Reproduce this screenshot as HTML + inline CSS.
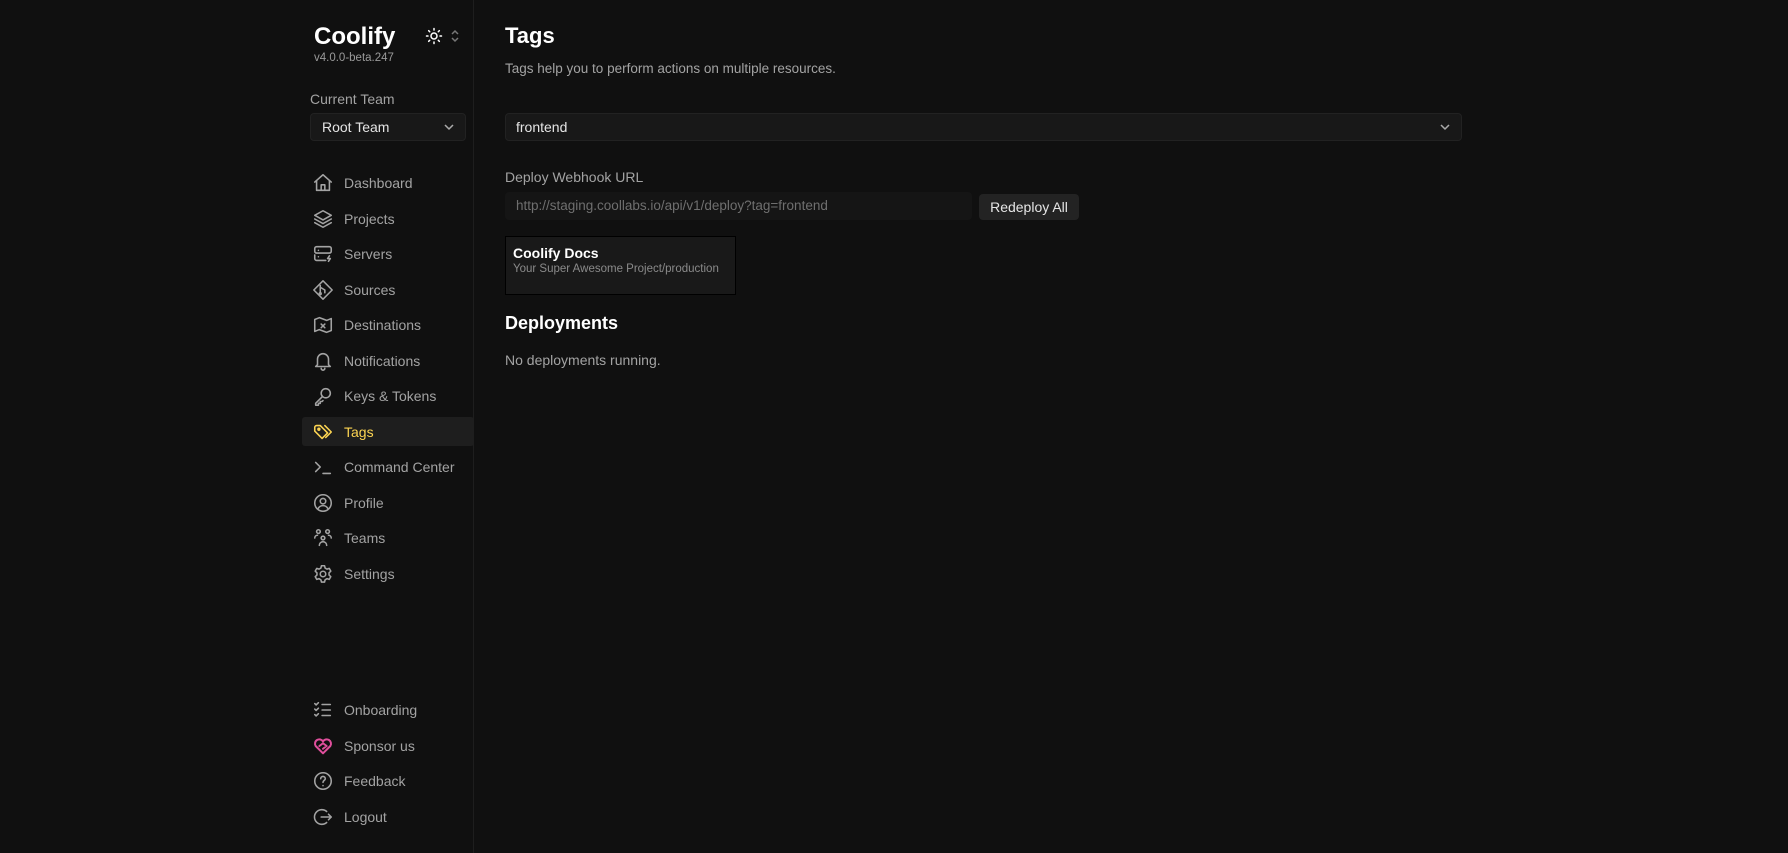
<!DOCTYPE html>
<html><head><meta charset="utf-8"><style>
*{margin:0;padding:0;box-sizing:border-box}
body{width:1788px;height:853px;background:#101010;font-family:"Liberation Sans",sans-serif;color:#a3a3a3;position:relative;overflow:hidden}
.a{position:absolute;white-space:nowrap}
.side{position:absolute;left:0;top:0;width:474px;height:853px;border-right:1px solid #1e1e1e}
.nav{position:absolute;left:302px;width:172px;height:30px;display:flex;align-items:center;font-size:14px;color:#a3a3a3}
.nav svg{position:absolute;left:10px;width:22px;height:22px;fill:none;stroke:#a3a3a3;stroke-width:1.7;stroke-linecap:round;stroke-linejoin:round}
.nav span{position:absolute;left:42px}
</style></head><body>
<div class="side"></div>
<div class="a" style="left:314px;top:23px;font-size:24px;font-weight:bold;color:#fff">Coolify</div>
<div class="a" style="left:314px;top:52px;font-size:11.5px;color:#9a9a9a">v4.0.0-beta.247</div>
<svg class="a" style="left:425px;top:27px" width="18" height="18" viewBox="0 0 24 24" fill="none" stroke="#fff" stroke-width="2" stroke-linecap="round"><circle cx="12" cy="12" r="4"/><path d="M12 2v2M12 20v2M4.9 4.9l1.4 1.4M17.7 17.7l1.4 1.4M2 12h2M20 12h2M4.9 19.1l1.4-1.4M17.7 6.3l1.4-1.4"/></svg>
<svg class="a" style="left:450px;top:29px" width="10" height="14" viewBox="0 0 10 14" fill="none" stroke="#777" stroke-width="1.5"><path d="M2 5l3-3 3 3M2 9l3 3 3-3"/></svg>
<div class="a" style="left:310px;top:91px;font-size:14px;color:#a3a3a3">Current Team</div>
<div class="a" style="left:310px;top:113px;width:156px;height:28px;background:#181818;border-radius:4px;border:1px solid #222"></div>
<div class="a" style="left:322px;top:119px;font-size:14px;color:#e5e5e5">Root Team</div>
<svg class="a" style="left:443px;top:122px" width="12" height="10" viewBox="0 0 12 10" fill="none" stroke="#aaa" stroke-width="1.5"><path d="M2 3l4 4 4-4"/></svg>

<div class="a" style="left:302px;top:417px;width:172px;height:29px;background:#1e1e1e;border-radius:3px"></div>

<div class="nav" style="top:168px"><svg viewBox="0 0 24 24"><path d="M3 11l9-8 9 8M5 9.5V20h14V9.5M10 20v-6h4v6"/></svg><span>Dashboard</span></div>
<div class="nav" style="top:204px"><svg viewBox="0 0 24 24"><path d="M12 3l9 5-9 5-9-5z M3 12l9 5 9-5M3 16l9 5 9-5"/></svg><span>Projects</span></div>
<div class="nav" style="top:239px"><svg viewBox="0 0 24 24"><rect x="3" y="4" width="18" height="7" rx="2"/><path d="M3 13v4a2 2 0 002 2h10M7 8h.01M7 15h.01M19 14l-2 3h3l-2 3"/></svg><span>Servers</span></div>
<div class="nav" style="top:275px"><svg viewBox="0 0 24 24"><path d="M12 2l10 10-10 10L2 12z M9 7v8M9 9l5 3v3"/><circle cx="9" cy="16" r="1"/></svg><span>Sources</span></div>
<div class="nav" style="top:310px"><svg viewBox="0 0 24 24"><path d="M3 6l5-2 8 3 5-2v13l-5 2-8-3-5 2z M10 11l4 4M14 11l-4 4"/></svg><span>Destinations</span></div>
<div class="nav" style="top:346px"><svg viewBox="0 0 24 24"><path d="M6 16V10a6 6 0 0112 0v6l2 2H4z M10 20a2 2 0 004 0"/></svg><span>Notifications</span></div>
<div class="nav" style="top:381px"><svg viewBox="0 0 24 24"><circle cx="15" cy="9" r="5"/><path d="M11.5 12.5L4 20v2h3v-2h2v-2h2l1-1"/></svg><span>Keys &amp; Tokens</span></div>
<div class="nav" style="top:417px;color:#fcd452"><svg viewBox="0 0 24 24" style="stroke:#fcd452"><path d="M3 7v4l8 8 6-6-8-8H5a2 2 0 00-2 2z M14 5l7 7-6 6"/><circle cx="7.5" cy="9" r="1"/></svg><span>Tags</span></div>
<div class="nav" style="top:452px"><svg viewBox="0 0 24 24"><path d="M4 7l5 5-5 5M12 19h8"/></svg><span>Command Center</span></div>
<div class="nav" style="top:488px"><svg viewBox="0 0 24 24"><circle cx="12" cy="12" r="9"/><circle cx="12" cy="10" r="3"/><path d="M6.5 18.5a6 6 0 0111 0"/></svg><span>Profile</span></div>
<div class="nav" style="top:523px"><svg viewBox="0 0 24 24"><circle cx="7" cy="5" r="2"/><circle cx="17" cy="5" r="2"/><circle cx="12" cy="12" r="2"/><path d="M3 12a3 3 0 013-3M21 12a3 3 0 00-3-3M8 20a4 4 0 018 0"/></svg><span>Teams</span></div>
<div class="nav" style="top:559px"><svg viewBox="0 0 24 24"><circle cx="12" cy="12" r="3"/><path d="M10.3 3h3.4l.6 2.5 2 1.2 2.5-.8 1.7 3-1.9 1.8v2.4l1.9 1.8-1.7 3-2.5-.8-2 1.2-.6 2.5h-3.4l-.6-2.5-2-1.2-2.5.8-1.7-3 1.9-1.8v-2.4L3.5 8.9l1.7-3 2.5.8 2-1.2z"/></svg><span>Settings</span></div>

<div class="nav" style="top:695px"><svg viewBox="0 0 24 24"><path d="M3 5l1.5 1.5L7 4M3 11l1.5 1.5L7 10M3 17l1.5 1.5L7 16M11 6h9M11 12h9M11 18h9"/></svg><span>Onboarding</span></div>
<div class="nav" style="top:731px"><svg viewBox="0 0 24 24" style="stroke:#e04f9c;stroke-width:2.2"><path d="M12 20l-8-8a4.5 4.5 0 018-5 4.5 4.5 0 018 5z M8 12l4-3 4 3-4 3"/></svg><span>Sponsor us</span></div>
<div class="nav" style="top:766px"><svg viewBox="0 0 24 24"><circle cx="12" cy="12" r="9"/><path d="M9.5 9.5a2.5 2.5 0 115 0c0 1.5-2.5 2-2.5 4M12 17h.01"/></svg><span>Feedback</span></div>
<div class="nav" style="top:802px"><svg viewBox="0 0 24 24"><path d="M16 6a8 8 0 100 12M10 12h11M18 9l3 3-3 3"/></svg><span>Logout</span></div>

<div class="a" style="left:505px;top:23px;font-size:22px;font-weight:bold;color:#fff">Tags</div>
<div class="a" style="left:505px;top:61px;font-size:13.5px;color:#a3a3a3">Tags help you to perform actions on multiple resources.</div>
<div class="a" style="left:505px;top:113px;width:957px;height:28px;background:#181818;border-radius:4px;border:1px solid #222"></div>
<div class="a" style="left:516px;top:119px;font-size:14px;color:#e5e5e5">frontend</div>
<svg class="a" style="left:1439px;top:122px" width="12" height="10" viewBox="0 0 12 10" fill="none" stroke="#aaa" stroke-width="1.5"><path d="M2 3l4 4 4-4"/></svg>
<div class="a" style="left:505px;top:169px;font-size:14px;color:#a3a3a3">Deploy Webhook URL</div>
<div class="a" style="left:505px;top:192px;width:467px;height:28px;background:#151515;border-radius:4px"></div>
<div class="a" style="left:516px;top:198px;font-size:13.5px;color:#6f6f6f">http://staging.coollabs.io/api/v1/deploy?tag=frontend</div>
<div class="a" style="left:979px;top:194px;width:100px;height:26px;background:#232323;border-radius:4px;font-size:14px;color:#e5e5e5;text-align:center;line-height:26px">Redeploy All</div>
<div class="a" style="left:505px;top:236px;width:231px;height:59px;background:#191919;border:1px solid #000"></div>
<div class="a" style="left:513px;top:245px;font-size:14px;font-weight:bold;color:#fff">Coolify Docs</div>
<div class="a" style="left:513px;top:263px;font-size:11.5px;color:#8a8a8a">Your Super Awesome Project/production</div>
<div class="a" style="left:505px;top:313px;font-size:18px;font-weight:bold;color:#fff">Deployments</div>
<div class="a" style="left:505px;top:352px;font-size:14px;color:#a3a3a3">No deployments running.</div>
</body></html>
